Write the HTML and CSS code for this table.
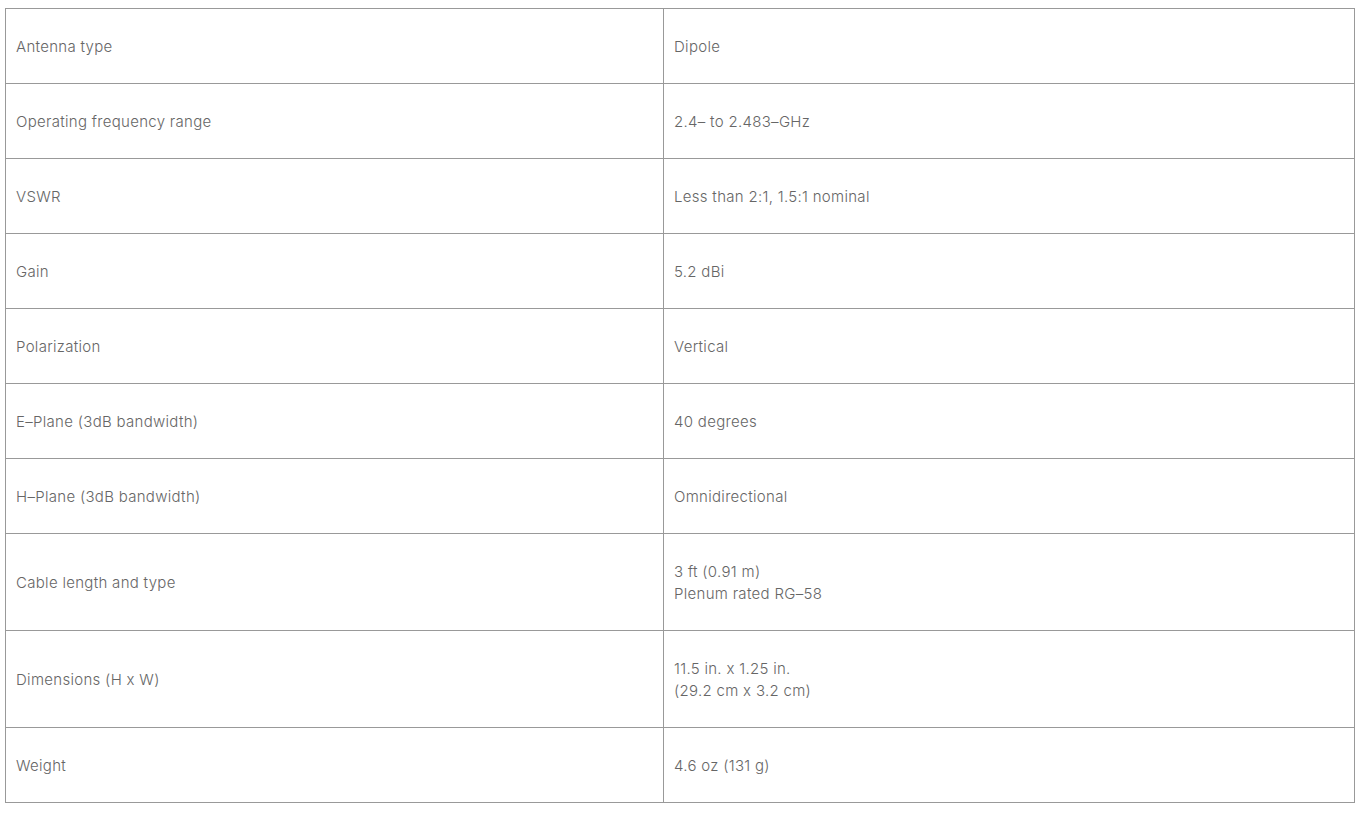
FILE: index.html
```html
<!DOCTYPE html>
<html>
<head>
<meta charset="utf-8">
<link rel="stylesheet" href="styles.css">
</head>
<body>
<table class="spec">
<tbody>
<tr><td>Antenna type</td><td>Dipole</td></tr>
<tr><td>Operating frequency range</td><td>2.4– to 2.483–GHz</td></tr>
<tr><td>VSWR</td><td>Less than 2:1, 1.5:1 nominal</td></tr>
<tr><td>Gain</td><td>5.2 dBi</td></tr>
<tr><td>Polarization</td><td>Vertical</td></tr>
<tr><td>E–Plane (3dB bandwidth)</td><td>40 degrees</td></tr>
<tr><td>H–Plane (3dB bandwidth)</td><td>Omnidirectional</td></tr>
<tr><td>Cable length and type</td><td>3 ft (0.91 m)<br>Plenum rated RG–58</td></tr>
<tr><td>Dimensions (H x W)</td><td>11.5 in. x 1.25 in.<br>(29.2 cm x 3.2 cm)</td></tr>
<tr><td>Weight</td><td>4.6 oz (131 g)</td></tr>
</tbody>
</table>
</body>
</html>
```
FILE: styles.css
```css
html, body {
  background: #fff;
}
body {
  margin: 8px 0 0 5px;
  font-family: "Inter", "Open Sans", "Liberation Sans", sans-serif;
  font-weight: 300;
  font-size: 15px;
  letter-spacing: 0.3px;
  color: #666;
}
.spec {
  width: 1350px;
  border-collapse: collapse;
  table-layout: fixed;
}
.spec td {
  border: 1px solid #999;
  padding: 27px 10px 25px;
  line-height: 22px;
  vertical-align: middle;
}
.spec td:first-child {
  width: 637px;
}
```
